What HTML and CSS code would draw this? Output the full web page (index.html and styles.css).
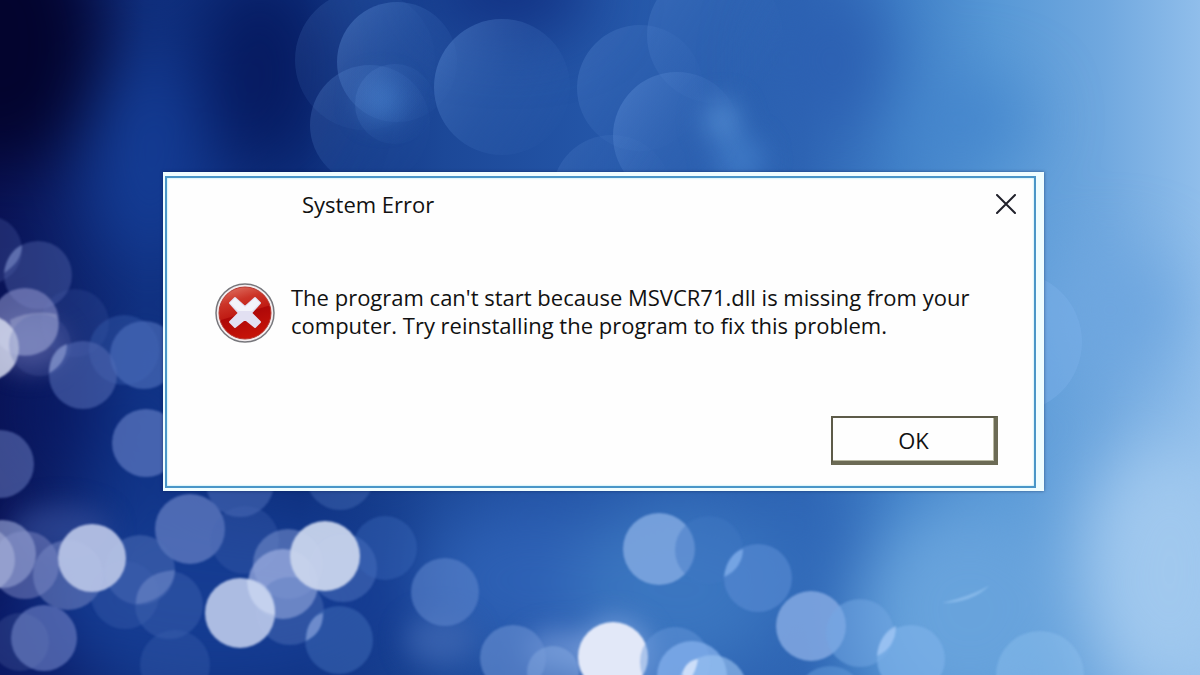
FILE: index.html
```html
<!DOCTYPE html>
<html lang="en">
<head>
  <meta charset="UTF-8" />
  <meta name="viewport" content="width=device-width, initial-scale=1.0"/>
  <title>System Error</title>
  <link rel="stylesheet" href="styles.css">
</head>
<body>
  <svg class="wallpaper" viewBox="0 0 1200 675" preserveAspectRatio="xMidYMid slice" aria-hidden="true">
    <defs>
      <linearGradient id="base">
        <stop offset="0" stop-color="#0a1458"/>
        <stop offset="0.12" stop-color="#10307f"/>
        <stop offset="0.25" stop-color="#0e307e"/>
        <stop offset="0.37" stop-color="#1c4898"/>
        <stop offset="0.5" stop-color="#2456a8"/>
        <stop offset="0.67" stop-color="#2e65b4"/>
        <stop offset="0.75" stop-color="#4080c8"/>
        <stop offset="0.83" stop-color="#5798d6"/>
        <stop offset="0.92" stop-color="#70a8df"/>
        <stop offset="1" stop-color="#90beeb"/>
      </linearGradient>
      <linearGradient id="rim" x1="0" y1="0.2" x2="1" y2="0.8">
        <stop offset="0" stop-color="#6a9ae0" stop-opacity="0.38"/>
        <stop offset="0.5" stop-color="#4a7cc8" stop-opacity="0.2"/>
        <stop offset="1" stop-color="#4a7cc8" stop-opacity="0"/>
      </linearGradient>
      <filter id="haze" x="-20%" y="-20%" width="140%" height="140%" color-interpolation-filters="sRGB"><feGaussianBlur stdDeviation="34"/></filter>
      <filter id="glow" x="-20%" y="-20%" width="140%" height="140%" color-interpolation-filters="sRGB"><feGaussianBlur stdDeviation="13"/></filter>
      <filter id="soft" x="-20%" y="-20%" width="140%" height="140%" color-interpolation-filters="sRGB"><feGaussianBlur stdDeviation="1.3"/></filter>
    </defs>
    <rect width="1200" height="675" fill="url(#base)"/>

    <!-- large areas of light and dark -->
    <g filter="url(#haze)">
      <ellipse cx="0" cy="40" rx="100" ry="130" fill="#03042e"/>
      <ellipse cx="260" cy="70" rx="60" ry="100" fill="#061a60"/>
      <ellipse cx="150" cy="160" rx="55" ry="110" fill="#143c94"/>
      <ellipse cx="145" cy="430" rx="65" ry="90" fill="#103488"/>
      <ellipse cx="60" cy="410" rx="40" ry="60" fill="#08165f"/>
      <ellipse cx="220" cy="600" rx="200" ry="90" fill="#153c92"/>
      <ellipse cx="10" cy="640" rx="50" ry="60" fill="#0a1c6c"/>
      <ellipse cx="510" cy="-10" rx="80" ry="40" fill="#102e80"/>
      <ellipse cx="530" cy="580" rx="110" ry="80" fill="#2d60b4"/>
      <ellipse cx="680" cy="590" rx="110" ry="90" fill="#3b76c0"/>
      <ellipse cx="810" cy="550" rx="50" ry="50" fill="#3069b8"/>
      <ellipse cx="830" cy="60" rx="55" ry="80" fill="#2c60b2"/>
      <ellipse cx="970" cy="610" rx="110" ry="110" fill="#68a3dc"/>
      <ellipse cx="1170" cy="570" rx="90" ry="130" fill="#a0c8ee"/>
      <ellipse cx="1110" cy="310" rx="70" ry="60" fill="#6ea6df"/>
      <ellipse cx="960" cy="120" rx="70" ry="40" fill="#4485cc"/>
    </g>
    <g filter="url(#glow)">
      <circle cx="382" cy="100" r="20" fill="#3c78c6" opacity="0.8"/>
      <ellipse cx="722" cy="120" rx="18" ry="20" fill="#5590d4" opacity="0.8"/>
      <ellipse cx="740" cy="160" rx="25" ry="25" fill="#4580cc" opacity="0.7"/>
      <ellipse cx="30" cy="345" rx="35" ry="25" fill="#6a70b0" opacity="0.6"/>
      <ellipse cx="60" cy="530" rx="50" ry="25" fill="#38509c" opacity="0.6"/>
      <ellipse cx="440" cy="640" rx="35" ry="25" fill="#4068b4" opacity="0.7"/>
      <ellipse cx="560" cy="650" rx="35" ry="20" fill="#6d94d4" opacity="0.8"/>
      <circle cx="615" cy="655" r="37" fill="#8fb0e8" opacity="0.6"/>
    </g>

    <!-- faint circles along the top -->
    <g fill="url(#rim)">
      <circle cx="365" cy="60" r="70" opacity="0.45"/>
      <circle cx="397" cy="62" r="60"/>
      <circle cx="370" cy="125" r="60" opacity="0.7"/>
      <circle cx="395" cy="104" r="40" opacity="0.5"/>
      <circle cx="502" cy="87" r="68"/>
      <circle cx="640" cy="88" r="63" opacity="0.7"/>
      <circle cx="715" cy="35" r="68" opacity="0.6"/>
      <circle cx="677" cy="136" r="64"/>
      <circle cx="612" cy="195" r="60" opacity="0.5"/>
    </g>
    <circle cx="1012" cy="342" r="70" fill="#7cb2ea" opacity="0.4"/>
    <path d="M942 603Q972 603 990 585Q974 595 942 603Z" fill="#9ac6f2" opacity="0.6" filter="url(#soft)"/>

    <!-- bokeh, left side -->
    <g filter="url(#soft)">
      <circle cx="-12" cy="250" r="34" fill="#5060a8" opacity="0.3"/>
      <circle cx="38" cy="275" r="34" fill="#5868b0" opacity="0.4"/>
      <path d="M4 273C6 258 14 248 22 245C22 257 15 266 4 273Z" fill="#6f80bc" opacity="0.7"/>
      <circle cx="75" cy="323" r="34" fill="#4058a4" opacity="0.25"/>
      <circle cx="25" cy="322" r="34" fill="#8890c8" opacity="0.6"/>
      <path d="M10 320Q30 310 56 314Q64 335 46 350Q30 358 15 354Z" fill="#a0a8d0" opacity="0.5"/>
      <circle cx="-14" cy="348" r="33" fill="#d4d8ec" opacity="0.85"/>
      <circle cx="40" cy="345" r="31" fill="#5060a8" opacity="0.25"/>
      <circle cx="124" cy="350" r="35" fill="#3a60b0" opacity="0.4"/>
      <circle cx="83" cy="375" r="34" fill="#5068b0" opacity="0.6"/>
      <path d="M49 373C49 357 57 347 67 344C67 358 59 368 49 373Z" fill="#8090c8" opacity="0.8"/>
      <circle cx="144" cy="355" r="34" fill="#486ab6" opacity="0.7"/>
      <circle cx="146" cy="443" r="34" fill="#5c78c0" opacity="0.7"/>
      <circle cx="0" cy="464" r="34" fill="#5e70b4" opacity="0.6"/>
    </g>

    <!-- bokeh, bottom -->
    <g filter="url(#soft)">
      <circle cx="190" cy="529" r="35" fill="#6680c4" opacity="0.7"/>
      <circle cx="240" cy="483" r="34" fill="#5272bc" opacity="0.5"/>
      <circle cx="340" cy="476" r="34" fill="#4a70b8" opacity="0.4"/>
      <circle cx="245" cy="540" r="34" fill="#4468b4" opacity="0.3"/>
      <circle cx="25" cy="565" r="34" fill="#6c78b8" opacity="0.6"/>
      <circle cx="2" cy="554" r="34" fill="#8c98cc" opacity="0.7"/>
      <circle cx="-18" cy="560" r="33" fill="#b4bce0" opacity="0.5"/>
      <circle cx="68" cy="575" r="35" fill="#7c8cc8" opacity="0.5"/>
      <circle cx="140" cy="570" r="35" fill="#5070b8" opacity="0.5"/>
      <circle cx="125" cy="595" r="34" fill="#4060b0" opacity="0.35"/>
      <circle cx="169" cy="605" r="34" fill="#4a6cb8" opacity="0.35"/>
      <path d="M136 604C136 584 150 572 175 570C174 590 155 603 136 604Z" fill="#7890cc" opacity="0.45"/>
      <circle cx="175" cy="665" r="35" fill="#3c60b0" opacity="0.35"/>
      <circle cx="92" cy="558" r="34" fill="#b8c4e6" opacity="0.93"/>
      <circle cx="44" cy="638" r="33" fill="#5e72b8" opacity="0.75"/>
      <circle cx="20" cy="642" r="29" fill="#7486c0" opacity="0.2"/>
      <circle cx="288" cy="564" r="35" fill="#7890cc" opacity="0.55"/>
      <circle cx="283" cy="584" r="35" fill="#98aade" opacity="0.75"/>
      <circle cx="290" cy="611" r="34" fill="#5878bf" opacity="0.4"/>
      <circle cx="343" cy="568" r="34" fill="#5c80c8" opacity="0.4"/>
      <circle cx="385" cy="548" r="32" fill="#3c68b8" opacity="0.4"/>
      <circle cx="240" cy="613" r="35" fill="#b8c6e8" opacity="0.93"/>
      <path d="M247 579C265 580 276 595 275 615C257 612 247 598 247 579Z" fill="#d0dcf4" opacity="0.6"/>
      <circle cx="325" cy="556" r="35" fill="#c8d4ec" opacity="0.95"/>
      <circle cx="339" cy="640" r="34" fill="#406cb8" opacity="0.5"/>
      <path d="M306 641C306 624 314 615 323 613C323 626 318 635 306 641Z" fill="#7c98d4" opacity="0.8"/>
      <circle cx="445" cy="592" r="34" fill="#5c84cc" opacity="0.6"/>
      <circle cx="513" cy="658" r="33" fill="#648cd0" opacity="0.65"/>
      <circle cx="553" cy="672" r="26" fill="#84a8e0" opacity="0.5"/>
      <circle cx="613" cy="657" r="35" fill="#e2e8f8"/>
      <circle cx="659" cy="549" r="36" fill="#80a8e0" opacity="0.85"/>
      <circle cx="709" cy="550" r="34" fill="#4078c4" opacity="0.45"/>
      <circle cx="758" cy="578" r="34" fill="#5488d0" opacity="0.7"/>
      <path d="M724 577C726 562 733 552 743 549C743 560 737 571 724 577Z" fill="#80acea" opacity="0.8"/>
      <circle cx="675" cy="662" r="35" fill="#6898dc" opacity="0.45"/>
      <circle cx="692" cy="676" r="35" fill="#84b0ec" opacity="0.75"/>
      <circle cx="712" cy="690" r="35" fill="#9cc4f2" opacity="0.6"/>
      <path d="M682 675C684 665 690 660 698 659C697 667 694 673 690 680Z" fill="#dce8fc" opacity="0.8"/>
      <circle cx="811" cy="626" r="35" fill="#82a8e2" opacity="0.85"/>
      <circle cx="860" cy="633" r="34" fill="#74a8e4" opacity="0.5"/>
      <circle cx="911" cy="659" r="34" fill="#7cb0e8" opacity="0.7"/>
      <path d="M877 656C878 641 886 630 896 626C896 640 889 651 877 656Z" fill="#a0c6f4" opacity="0.8"/>
      <circle cx="830" cy="700" r="34" fill="#649cdc" opacity="0.5"/>
      <circle cx="1040" cy="675" r="44" fill="#90c2f0" opacity="0.4"/>
    </g>
  </svg>

  <main class="desktop">
    <div class="dialog" role="alertdialog" aria-labelledby="dialogTitle" aria-describedby="dialogMessage">
      <div class="dialog-frame">
        <div class="title-bar">
          <h1 id="dialogTitle">System Error</h1>
          <button type="button" class="close-button" aria-label="Close">
            <svg viewBox="0 0 20 20" width="20" height="20">
              <path d="M1 1L19 19M19 1L1 19" stroke="#20202a" stroke-width="2" stroke-linecap="round"/>
            </svg>
          </button>
        </div>

        <div class="dialog-body">
          <svg class="error-icon" viewBox="0 0 60 60" aria-hidden="true">
            <defs>
              <linearGradient id="red" x1="0.3" y1="0" x2="0.6" y2="1">
                <stop offset="0" stop-color="#dc6a5c"/>
                <stop offset="0.25" stop-color="#cc3428"/>
                <stop offset="0.5" stop-color="#c01c14"/>
                <stop offset="0.52" stop-color="#ae0808"/>
                <stop offset="1" stop-color="#c81408"/>
              </linearGradient>
            </defs>
            <circle cx="30" cy="30" r="29" fill="#f4eef0" stroke="#77777c" stroke-width="1.5"/>
            <circle cx="30" cy="30" r="26" fill="url(#red)" stroke="#b83830"/>
            <path d="M20 15L30 24L40 15L45 20L36 30L45 39L40 44L30 36L20 44L15 39L24 30L15 20Z" fill="#e2e0f2" stroke="#e2e0f2" stroke-width="2" stroke-linejoin="round"/>
            <path d="M20 15L30 24L40 15L45 20L37 28L23 28L15 20Z" fill="#fff" opacity="0.6"/>
          </svg>
          <p id="dialogMessage">The program can't start because MSVCR71.dll is missing from your computer. Try reinstalling the program to fix this problem.</p>
        </div>

        <div class="dialog-actions">
          <button type="button" class="ok-button">OK</button>
        </div>
      </div>
    </div>
  </main>
</body>
</html>
```
FILE: styles.css
```css
* {
  box-sizing: border-box;
  font-family: "Open Sans", "Noto Sans", sans-serif;
}

body {
  margin: 0;
  background: #1c4898;
  color: #111;
}

.wallpaper {
  position: fixed;
  inset: 0;
  width: 100%;
  height: 100%;
}

.desktop {
  position: relative;
  padding: 172px 13% 24px 163px;
}

.dialog {
  padding: 4px 8px 3px 2px;
  background: #effdff;
  box-shadow: 0 0 3px rgba(0, 20, 60, 0.5);
}

.dialog-frame {
  border: 2px solid #4a96c8;
  background: #fefefe;
  box-shadow: inset 0 0 2px #8fe4f4;
}

.title-bar {
  display: flex;
  align-items: center;
  justify-content: space-between;
  padding: 8px 18px 0 135px;
}

.title-bar h1 {
  margin: 0;
  font-size: 22px;
  font-weight: normal;
  line-height: 36px;
}

.close-button {
  display: flex;
  padding: 0;
  border: none;
  background: none;
  cursor: pointer;
}

.dialog-body {
  display: flex;
  align-items: flex-start;
  gap: 16px;
  padding: 61px 48px 0;
}

.error-icon {
  flex: none;
  width: 60px;
  height: 60px;
}

.dialog-body p {
  max-width: 690px;
  margin: 0;
  font-size: 22px;
  line-height: 28px;
}

.dialog-actions {
  display: flex;
  justify-content: flex-end;
  padding: 73px 36px 21px;
}

.ok-button {
  width: 167px;
  height: 49px;
  padding: 0;
  border: 2px solid #5d5b49;
  border-right: 4px solid #6c6b55;
  border-bottom: 4px solid #6c6b55;
  background: #fefefe;
  box-shadow: inset -1px -1px 0 #b9b9a2;
  color: #111;
  font-size: 22px;
  cursor: pointer;
}

.ok-button:focus-visible,
.close-button:focus-visible {
  outline: 2px solid #4a96c8;
}
```
